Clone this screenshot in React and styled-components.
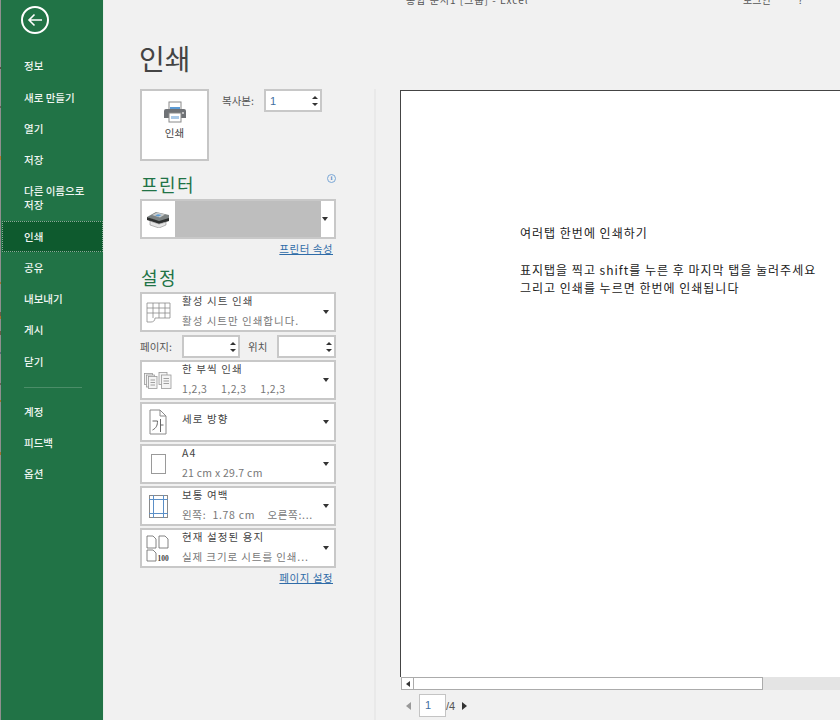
import React from "react";
import styled, { createGlobalStyle } from "styled-components";

const Global = createGlobalStyle`
  html, body { margin: 0; padding: 0; background: #f1f1f1; }
  body { font-family: "Noto Sans CJK KR", "Noto Sans", sans-serif; }
  * { box-sizing: border-box; }
`;

const Shell = styled.div`
  width: 840px; height: 720px; display: flex; overflow: hidden; background: #f1f1f1;
`;
const Sidebar = styled.nav`
  width: 104px; flex: none; height: 100%;
  background: linear-gradient(to bottom,
    #8f8f8f 0 67px, #5a5044 67px 69px, #8f8f8f 69px 106px, #6a6058 106px 108px, #8f8f8f 108px 156px,
    #b5762f 156px 160px, #8f8f8f 160px 282px, #a5702f 282px 284px, #8f8f8f 284px 312px, #6a5a48 312px 316px,
    #a5702f 316px 319px, #8f8f8f 319px 331px, #6a5a48 331px 335px, #8f8f8f 335px 352px, #5a6a78 352px 354px,
    #8f8f8f 354px 383px, #6a6058 383px 385px, #8f8f8f 385px 400px, #a5702f 400px 402px, #8f8f8f 402px 452px,
    #a5702f 452px 455px, #8f8f8f 455px 100%) 0 0 / 1px 100% no-repeat, #217346;
  border-right: 1px solid #e6efe9;
  display: flex; flex-direction: column; padding: 6px 0 0 1px;
`;
const BackButton = styled.button`
  width: 28px; height: 28px; margin: 0 0 16.8px 20px; padding: 0; border: 2px solid #fff; border-radius: 50%;
  background: none; display: flex; align-items: center; justify-content: center; flex: none;
`;
const NavItem = styled.div`
  padding: 0 8px 0 23px; min-height: 31.2px; display: flex; align-items: center;
  font-size: 10.5px; line-height: 14px; color: #f0f6f2; font-weight: 500; flex: none;
  ${(p) => p.$tall && "min-height: 45.7px;"}
  ${(p) => p.$active && "background: #0e5a2e; outline: 1px dotted #8aa897; outline-offset: -1px; margin-left: 1px; padding-left: 22px;"}
`;
const NavRule = styled.div`
  height: 1px; width: 58px; margin: 10px 0 8px 23px; background: #4b8d68; flex: none;
`;
const Main = styled.main`
  flex: 1; min-width: 0; display: flex; flex-direction: column;
`;
const TitleBar = styled.div`
  height: 6px; flex: none; overflow: hidden;
  display: flex; align-items: flex-end; font-size: 10px; line-height: 12px; color: #555;
  padding-left: 302px;
`;
const TitleText = styled.span`
  flex: none; width: 337px; white-space: nowrap; letter-spacing: 1px;
`;
const TitleHelp = styled.span`
  flex: none; width: 55px; white-space: nowrap;
`;
const Body = styled.div`
  flex: 1; display: flex; min-height: 0;
`;
const LeftPane = styled.section`
  width: 270px; flex: none; padding: 33px 0 0 36px;
`;
const PaneDivider = styled.div`
  width: 2px; flex: none; margin-top: 83px; background: #e9e9e9;
`;
const PageTitle = styled.h1`
  margin: 0 0 12px -1px; font-size: 28px; line-height: 38px; font-weight: 400; color: #444; height: 38px;
`;
const CopyRow = styled.div`
  display: flex; align-items: flex-start; width: 196px;
`;
const PrintButton = styled.button`
  width: 69px; height: 72px; flex: none; background: #fff; border: 2px solid #c6c6c6; padding: 10px 0 0 0;
  display: flex; flex-direction: column; align-items: center; gap: 3px; font: inherit; font-size: 10.5px; line-height: 14px; color: #444;
`;
const CopyLabel = styled.span`
  font-size: 10.5px; line-height: 14px; color: #555; margin: 5px 9px 0 13px; width: 33px; white-space: nowrap; flex: none;
`;
const SpinBox = styled.div`
  height: 23px; width: ${(p) => p.$w}px; flex: none; background: #fff; border: 2px solid #c8c8c8;
  display: flex; align-items: center; justify-content: space-between; padding: 0 2px 0 4px;
  font-size: 11px; color: #3f6f9f; font-family: "Liberation Sans", sans-serif;
`;
const SpinArrows = styled.span`
  display: flex; flex-direction: column; gap: 4px; margin-left: auto;
`;
const Up = styled.i`
  display: block; width: 0; height: 0; border: 3px solid transparent; border-top: 0; border-bottom: 3px solid #333;
`;
const Down = styled.i`
  display: block; width: 0; height: 0; border: 3px solid transparent; border-bottom: 0; border-top: 3px solid #333;
`;
const Heading = styled.div`
  display: flex; justify-content: space-between; align-items: flex-start; width: 196px;
  font-size: 18px; line-height: 26px; height: 26px; color: #217346; letter-spacing: 1.5px;
  margin-top: ${(p) => p.$top}px; margin-bottom: ${(p) => p.$bottom}px; padding-left: 1px;
`;
const InfoDot = styled.span`
  width: 9px; height: 9px; border-radius: 50%; border: 1px solid #7aa7d6; color: #5b8fc7; font: 700 7px/7px "Liberation Serif", serif;
  text-align: center; margin-top: 3px; letter-spacing: 0;
`;
const Select = styled.div`
  width: 196px; height: 40px; background: #fff; border: 2px solid #c8c8c8;
  display: flex; align-items: stretch; flex: none;
`;
const SelectIcon = styled.span`
  width: ${(p) => p.$w || 32}px; margin-right: ${(p) => p.$mr ?? 8}px; flex: none; display: flex; align-items: center; justify-content: center;
`;
const SelectText = styled.div`
  flex: 1; min-width: 0; display: flex; flex-direction: column; justify-content: ${(p) => (p.$single ? "flex-start" : "space-between")}; padding: 0 0 2px 0;
`;
const Line1 = styled.div`
  font-size: 10.5px; line-height: 14px; color: #444; white-space: nowrap; letter-spacing: 1.1px; ${(p) => p.$single && "margin-top: 8px;"}
`;
const Line2 = styled.div`
  font-size: 10.5px; line-height: 14px; color: #777; white-space: pre; letter-spacing: ${(p) => p.$ls ?? 1}px;
`;
const Caret = styled.span`
  width: ${(p) => p.$w || 16}px; flex: none; display: flex; align-items: center; justify-content: ${(p) => (p.$w ? "flex-start" : "center")}; padding-left: ${(p) => (p.$w ? 1 : 0)}px;
  &::after { content: ""; width: 0; height: 0; border: 3px solid transparent; border-bottom: 0; border-top: 4px solid #333; }
`;
const PrinterBlock = styled.div`
  flex: 1; background: #bebebe;
`;
const LinkLine = styled.div`
  width: 193px; text-align: right; font-size: 10.5px; line-height: 14px; color: #2f6ca8; text-decoration: underline; letter-spacing: 0.5px;
  margin-top: ${(p) => p.$top}px;
`;
const Stack = styled.div`
  display: flex; flex-direction: column; gap: 2px; width: 196px;
`;
const PageRow = styled.div`
  display: flex; align-items: center; height: 23px; margin-top: 1px;
`;
const PageLabel = styled.span`
  font-size: 10.5px; line-height: 14px; color: #555; width: ${(p) => p.$w}px; flex: none; white-space: nowrap; padding-left: ${(p) => p.$pl || 0}px;
`;
const RightPane = styled.section`
  flex: 1; min-width: 0; display: flex; flex-direction: column; padding: 84px 0 0 24px;
`;
const Sheet = styled.div`
  height: 587px; flex: none; background: #fff; border-top: 1px solid #444; border-left: 1px solid #444; padding: 133px 0 0 119px;
  font-size: 12px; letter-spacing: 1px; line-height: 18px; color: #222; white-space: nowrap;
`;
const SheetGap = styled.div`
  height: 19px;
`;
const HScroll = styled.div`
  height: 13px; flex: none; background: #e4e4e4; display: flex; margin-left: 1px;
`;
const ScrollArrow = styled.div`
  width: 13px; flex: none; background: #fff; border: 1px solid #ababab; display: flex; align-items: center; justify-content: center;
  &::after { content: ""; width: 0; height: 0; border: 3px solid transparent; border-left: 0; border-right: 4px solid #333; }
`;
const ScrollThumb = styled.div`
  width: 349px; flex: none; background: #fff; border: 1px solid #ababab; border-left: 0;
`;
const Pager = styled.div`
  display: flex; align-items: center; margin-top: 4px; padding-left: 6px; height: 23px;
  font-size: 11px; color: #555; font-family: "Liberation Sans", sans-serif;
`;
const Tri = styled.i`
  width: 0; height: 0; flex: none; border: 4px solid transparent;
  ${(p) => p.$left ? `border-left: 0; border-right: 5px solid #999; margin-right: 8px;` : `border-right: 0; border-left: 5px solid #333; margin-left: 7px;`}
`;
const PageInput = styled.div`
  width: 27px; height: 23px; background: #fff; border: 1px solid #c4c4c4; padding-left: 5px; line-height: 21px; color: #3f6f9f; flex: none;
`;

const Ico = styled.svg`
  display: block; flex: none;
`;

const PrinterIcon = () => (
  <Ico width="24" height="22" viewBox="0 0 24 22">
    <rect x="6" y="1" width="12" height="8" fill="#fff" stroke="#8a8a8a" />
    <rect x="7" y="6" width="10" height="3" fill="#5b9bd5" />
    <path d="M3 8h18a2 2 0 0 1 2 2v7H1v-7a2 2 0 0 1 2-2z" fill="#6f7276" />
    <rect x="6" y="12" width="12" height="9" fill="#fff" stroke="#8a8a8a" />
    <rect x="8" y="15" width="8" height="3" fill="#a9c9e8" />
    <circle cx="20" cy="12" r="1" fill="#ddd" />
  </Ico>
);
const MfpIcon = () => (
  <Ico width="24" height="17" viewBox="0 0 24 17">
    <path d="M1 6l9-5 13 3v4l-10 3z" fill="#7d8383" />
    <path d="M6 4l5-2.4 8 2-5 3z" fill="#c9cccc" />
    <path d="M9 4.5l3-1.3 3.5.8-3 1.4z" fill="#5b9bd5" />
    <path d="M1 6l12 4 10-3v3l-10 3-12-4z" fill="#2e3030" />
    <path d="M4 10l9 3 7-2v3l-7 3-9-3z" fill="#e4e4e4" stroke="#777" strokeWidth="0.5" />
  </Ico>
);
const SheetIcon = () => (
  <Ico width="25" height="21" viewBox="0 0 25 21" fill="none" stroke="#8a8a8a" strokeWidth="0.8">
    <path d="M1 1h23v15H9c0 3-2 4-4 4H1z" />
    <path d="M7 1v15M13 1v15M19 1v15M1 6h23M1 11h23" />
  </Ico>
);
const CollateIcon = () => (
  <Ico width="28" height="17" viewBox="0 0 28 17" fill="#f4f4f4" stroke="#9a9a9a" strokeWidth="0.8">
    <rect x="0.5" y="1.5" width="8" height="11" />
    <rect x="2.5" y="3" width="8" height="12" />
    <rect x="4.5" y="4.5" width="8.5" height="12" />
    <rect x="15" y="0.5" width="8" height="12" />
    <rect x="17.5" y="3" width="9.5" height="13.5" />
    <path d="M6.5 8h4.5M6.5 10.5h4.5M6.5 13h4.5M19.5 6.5h5.5M19.5 9h5.5M19.5 11.5h5.5" fill="none" stroke="#8a8a8a" />
  </Ico>
);
const PortraitIcon = () => (
  <Ico width="18" height="26" viewBox="0 0 18 26" fill="none">
    <path d="M1 1h10l6 6v18H1z" stroke="#8a8a8a" fill="#fff" />
    <path d="M11 1v6h6" stroke="#8a8a8a" />
    <path d="M3.5 12h5c0 4-1 7-5 9M11.5 10v13M11.5 16h3" stroke="#666" strokeWidth="1" />
  </Ico>
);
const A4Icon = () => (
  <Ico width="15" height="20" viewBox="0 0 15 20">
    <rect x="0.5" y="0.5" width="14" height="19" fill="#fff" stroke="#9a9a9a" />
  </Ico>
);
const MarginIcon = () => (
  <Ico width="19" height="23" viewBox="0 0 19 23" fill="none">
    <rect x="0.5" y="0.5" width="18" height="22" stroke="#8a8a8a" />
    <path d="M4.5 0v23M14.5 0v23M0 4.5h19M0 18.5h19" stroke="#5b8fc7" />
  </Ico>
);
const ScaleIcon = () => (
  <Ico width="24" height="27" viewBox="0 0 24 27">
    <g fill="#fff" stroke="#666" strokeWidth="0.8">
      <path d="M1 1h6l3 3v9H1zM13 1h6l3 3v9h-9zM1 15h6l3 3v8H1z" />
    </g>
    <text x="11.5" y="26" fontSize="7.5" fontWeight="700" fill="#444" fontFamily="Liberation Serif, serif">100</text>
  </Ico>
);

const navTop = ["정보", "새로 만들기", "열기", "저장"];
const navMid = ["공유", "내보내기", "게시", "닫기"];
const navBottom = ["계정", "피드백", "옵션"];

const rows = [
  { icon: <CollateIcon />, a: "한 부씩 인쇄", b: "1,2,3     1,2,3     1,2,3", ls: 0.4 },
  { icon: <PortraitIcon />, a: "세로 방향", single: true },
  { icon: <A4Icon />, a: "A4", b: "21 cm x 29.7 cm", ls: 0.25 },
  { icon: <MarginIcon />, a: "보통 여백", b: "왼쪽:  1.78 cm    오른쪽:...", ls: 0.7 },
  { icon: <ScaleIcon />, a: "현재 설정된 용지", b: "실제 크기로 시트를 인쇄...", ls: 0.9 },
];

const Row = ({ icon, a, b, single, ls }) => (
  <Select>
    <SelectIcon>{icon}</SelectIcon>
    <SelectText $single={single}>
      <Line1 $single={single}>{a}</Line1>
      {b && <Line2 $ls={ls}>{b}</Line2>}
    </SelectText>
    <Caret />
  </Select>
);

export default function App() {
  return (
    <Shell>
      <Global />
      <Sidebar>
        <BackButton aria-label="뒤로">
          <Ico width="16" height="14" viewBox="0 0 16 14" fill="none" stroke="#fff" strokeWidth="1.6">
            <path d="M15 7H2M7.5 1.5L2 7l5.5 5.5" />
          </Ico>
        </BackButton>
        {navTop.map((t) => <NavItem key={t}>{t}</NavItem>)}
        <NavItem $tall>다른 이름으로<br />저장</NavItem>
        <NavItem $active>인쇄</NavItem>
        {navMid.map((t) => <NavItem key={t}>{t}</NavItem>)}
        <NavRule />
        {navBottom.map((t) => <NavItem key={t}>{t}</NavItem>)}
      </Sidebar>
      <Main>
        <TitleBar>
          <TitleText>통합 문서1 [그룹] - Excel</TitleText>
          <TitleHelp>로그인</TitleHelp>
          <span>?</span>
        </TitleBar>
        <Body>
          <LeftPane>
            <PageTitle>인쇄</PageTitle>
            <CopyRow>
              <PrintButton><PrinterIcon />인쇄</PrintButton>
              <CopyLabel>복사본:</CopyLabel>
              <SpinBox $w={58}>1<SpinArrows><Up /><Down /></SpinArrows></SpinBox>
            </CopyRow>
            <Heading $top={10} $bottom={2}>프린터<InfoDot>i</InfoDot></Heading>
            <Select>
              <SelectIcon $w={31} $mr={2}><MfpIcon /></SelectIcon>
              <PrinterBlock />
              <Caret $w={13} />
            </Select>
            <LinkLine $top={3}>프린터 속성</LinkLine>
            <Heading $top={8} $bottom={2}>설정</Heading>
            <Stack>
              <Select>
                <SelectIcon><SheetIcon /></SelectIcon>
                <SelectText>
                  <Line1>활성 시트 인쇄</Line1>
                  <Line2>활성 시트만 인쇄합니다.</Line2>
                </SelectText>
                <Caret />
              </Select>
              <PageRow>
                <PageLabel $w={42}>페이지:</PageLabel>
                <SpinBox $w={58}><SpinArrows><Up /><Down /></SpinArrows></SpinBox>
                <PageLabel $w={37} $pl={8}>위치</PageLabel>
                <SpinBox $w={59}><SpinArrows><Up /><Down /></SpinArrows></SpinBox>
              </PageRow>
              {rows.map((r) => <Row key={r.a} {...r} />)}
            </Stack>
            <LinkLine $top={3}>페이지 설정</LinkLine>
          </LeftPane>
          <PaneDivider />
          <RightPane>
            <Sheet>
              여러탭 한번에 인쇄하기
              <SheetGap />
              표지탭을 찍고 shift를 누른 후 마지막 탭을 눌러주세요
              <br />
              그리고 인쇄를 누르면 한번에 인쇄됩니다
            </Sheet>
            <HScroll>
              <ScrollArrow />
              <ScrollThumb />
            </HScroll>
            <Pager>
              <Tri $left />
              <PageInput>1</PageInput>
              <span>/4</span>
              <Tri />
            </Pager>
          </RightPane>
        </Body>
      </Main>
    </Shell>
  );
}
